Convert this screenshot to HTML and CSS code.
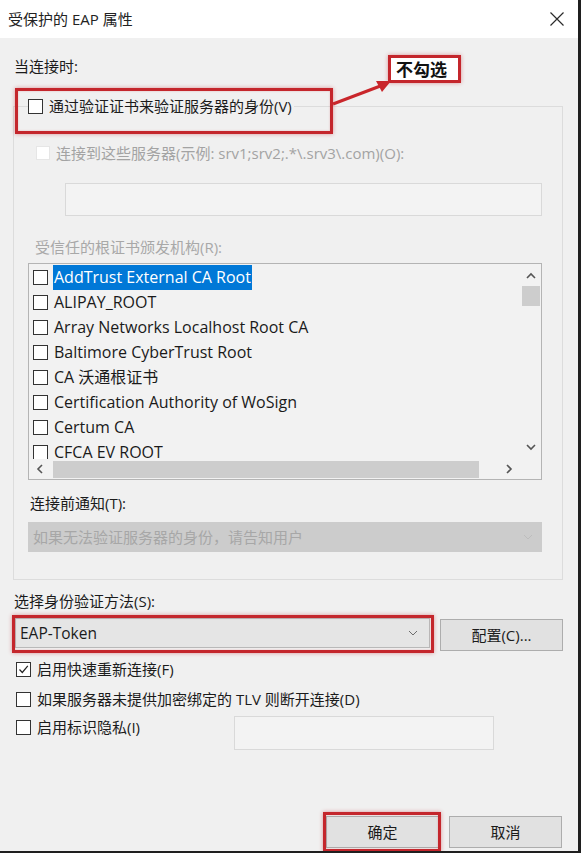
FILE: index.html
```html
<!DOCTYPE html>
<html lang="zh-CN">
<head>
<meta charset="utf-8">
<title>受保护的 EAP 属性</title>
<link rel="stylesheet" href="styles.css">
</head>
<body>
<div class="window">
  <div class="titlebar">
    <span class="title">受保护的 EAP 属性</span>
    <svg class="close" width="16" height="16" viewBox="0 0 16 16"><path d="M1.5 1.5 L14.5 14.5 M14.5 1.5 L1.5 14.5" stroke="#2b2b2b" stroke-width="1.2" fill="none"/></svg>
  </div>
  <div class="content">
    <div class="label label-top">当连接时:</div>
    <fieldset class="group">
      <legend class="legend"><span class="cb"></span><span>通过验证证书来验证服务器的身份(V)</span></legend>
      <div class="dis-row"><span class="cb cb-dis"></span><span>连接到这些服务器(示例: srv1;srv2;.*\.srv3\.com)(O):</span></div>
      <div class="textbox"></div>
      <div class="label label-dis">受信任的根证书颁发机构(R):</div>
      <div class="listbox">
        <div class="list-main">
          <div class="items">
            <div class="item"><span class="cb"></span><span class="item-text sel">AddTrust External CA Root</span></div>
            <div class="item"><span class="cb"></span><span class="item-text">ALIPAY_ROOT</span></div>
            <div class="item"><span class="cb"></span><span class="item-text">Array Networks Localhost Root CA</span></div>
            <div class="item"><span class="cb"></span><span class="item-text">Baltimore CyberTrust Root</span></div>
            <div class="item"><span class="cb"></span><span class="item-text">CA 沃通根证书</span></div>
            <div class="item"><span class="cb"></span><span class="item-text">Certification Authority of WoSign</span></div>
            <div class="item"><span class="cb"></span><span class="item-text">Certum CA</span></div>
            <div class="item"><span class="cb"></span><span class="item-text">CFCA EV ROOT</span></div>
          </div>
          <div class="vscroll">
            <svg class="arr" width="10" height="8" viewBox="0 0 10 8"><path d="M1 6 L5 2 L9 6" stroke="#555" stroke-width="1.6" fill="none"/></svg>
            <div class="vthumb"></div>
            <div class="vtrack"></div>
            <svg class="arr" width="10" height="8" viewBox="0 0 10 8"><path d="M1 2 L5 6 L9 2" stroke="#555" stroke-width="1.6" fill="none"/></svg>
          </div>
        </div>
        <div class="hscroll-row">
          <div class="hscroll">
            <svg class="harr" width="8" height="10" viewBox="0 0 8 10"><path d="M6 1 L2 5 L6 9" stroke="#555" stroke-width="1.6" fill="none"/></svg>
            <div class="hthumb"></div>
            <svg class="harr" width="8" height="10" viewBox="0 0 8 10"><path d="M2 1 L6 5 L2 9" stroke="#555" stroke-width="1.6" fill="none"/></svg>
          </div>
          <div class="corner"></div>
        </div>
      </div>
      <div class="label label-notify">连接前通知(T):</div>
      <div class="select select-dis">
        <span>如果无法验证服务器的身份，请告知用户</span>
        <svg width="10" height="6" viewBox="0 0 10 6"><path d="M1 1 L5 5 L9 1" stroke="#bdbdbd" stroke-width="1" fill="none"/></svg>
      </div>
    </fieldset>
    <div class="label label-method">选择身份验证方法(S):</div>
    <div class="method-row">
      <div class="select select-eap">
        <span>EAP-Token</span>
        <svg width="10" height="6" viewBox="0 0 10 6"><path d="M1 1 L5 5 L9 1" stroke="#6d6d6d" stroke-width="1" fill="none"/></svg>
      </div>
      <div class="btn btn-config">配置(C)...</div>
    </div>
    <div class="check-row row-fast"><span class="cb cb-on"><svg width="13" height="13" viewBox="0 0 13 13"><path d="M2.5 6.5 L5.3 9.5 L10.8 2.8" stroke="#222" stroke-width="1.2" fill="none"/></svg></span><span>启用快速重新连接(F)</span></div>
    <div class="check-row row-tlv"><span class="cb"></span><span>如果服务器未提供加密绑定的 TLV 则断开连接(D)</span></div>
    <div class="privacy-row">
      <div class="check-row row-priv"><span class="cb"></span><span>启用标识隐私(I)</span></div>
      <div class="textbox textbox-priv"></div>
    </div>
    <div class="footer">
      <div class="btn btn-ok">确定</div>
      <div class="btn btn-cancel">取消</div>
    </div>
  </div>

  <div class="mark mark-verify"></div>
  <div class="mark mark-eap"></div>
  <div class="mark mark-ok"></div>
  <div class="note">不勾选</div>
  <svg class="arrow" width="70" height="40" viewBox="0 0 70 40"><path d="M2 30 L52 11" stroke="#c9262b" stroke-width="3" fill="none"/><path d="M60 7 L45 7 L51 18 Z" fill="#c9262b"/></svg>
</div>
</body>
</html>
```

FILE: styles.css
```css
* { box-sizing: border-box; }

body {
  margin: 0;
  background: #1f1f1f;
}

.window {
  position: relative;
  width: 578px;
  height: 851px;
  background: #f0f0f0;
  display: flex;
  flex-direction: column;
  font-family: "Open Sans", "Noto Sans CJK SC", sans-serif;
  font-size: 15px;
  line-height: 20px;
  color: #1b1b1b;
}

.titlebar {
  height: 38px;
  flex: none;
  background: #ffffff;
  display: flex;
  align-items: center;
  justify-content: space-between;
  padding: 0 13px 0 8px;
}

.title {
  font-size: 15px;
  color: #222;
}

.content {
  flex: 1;
  display: flex;
  flex-direction: column;
  padding: 0 15px 0 13px;
}

.label {
  height: 20px;
  white-space: nowrap;
}

.label-top {
  margin-top: 18px;
  margin-left: 1px;
}

.group {
  margin: 20px 0 0 0;
  padding: 0 20px 27px 14px;
  border: 1px solid #dcdcdc;
  min-width: 0;
}

.legend {
  padding: 0 2px 0 0;
  display: flex;
  align-items: center;
  gap: 6px;
  height: 20px;
}

.cb {
  flex: none;
  width: 15px;
  height: 15px;
  background: #ffffff;
  border: 1px solid #333333;
  display: inline-flex;
  align-items: center;
  justify-content: center;
}

.cb-dis {
  border-color: #e6e6e6;
  width: 14px;
  height: 14px;
}

.dis-row {
  margin: 27px 0 0 8px;
  height: 20px;
  display: flex;
  align-items: center;
  gap: 6px;
  color: #a3a3a3;
  white-space: nowrap;
}

.textbox {
  margin: 20px 0 0 37px;
  height: 33px;
  background: #f3f3f3;
  border: 1px solid #d9d9d9;
}

.label-dis {
  margin: 21px 0 0 7px;
  color: #a8a8a8;
}

.listbox {
  margin-top: 6px;
  height: 217px;
  border: 1px solid #b4b4b4;
  background: #f2f2f2;
  display: flex;
  flex-direction: column;
}

.list-main {
  height: 195px;
  display: flex;
}

.items {
  flex: 1;
  overflow: hidden;
  padding: 1px 0 0 4px;
  font-size: 16px;
}

.item {
  height: 25px;
  display: flex;
  align-items: center;
  gap: 5px;
  white-space: nowrap;
}

.item-text {
  padding: 0 1px;
  height: 25px;
  line-height: 25px;
  color: #1a1a1a;
}

.item-text.sel {
  background: #0078d7;
  color: #ffffff;
}

.vscroll {
  flex: none;
  width: 21px;
  display: flex;
  flex-direction: column;
  align-items: center;
  padding-top: 8px;
}

.arr {
  flex: none;
}

.vthumb {
  flex: none;
  width: 18px;
  height: 20px;
  margin-top: 6px;
  background: #cdcdcd;
}

.vtrack {
  flex: 1;
}

.vscroll .arr:last-child {
  margin-bottom: 8px;
}

.hscroll-row {
  height: 20px;
  display: flex;
}

.hscroll {
  flex: 1;
  display: flex;
  align-items: center;
  padding: 0 7px 0 7px;
}

.harr {
  flex: none;
}

.hthumb {
  width: 426px;
  height: 17px;
  margin: 0 0 0 9px;
  background: #cdcdcd;
}

.hscroll .harr:last-child {
  margin-left: auto;
}

.corner {
  width: 21px;
}

.label-notify {
  margin: 13px 0 0 2px;
}

.select {
  height: 30px;
  display: flex;
  align-items: center;
  justify-content: space-between;
  white-space: nowrap;
}

.select-dis {
  margin-top: 9px;
  background: #cccccc;
  color: #a7a7a7;
  padding: 0 9px 0 5px;
}

.label-method {
  margin: 11px 0 0 1px;
}

.method-row {
  margin-top: 7px;
  display: flex;
  align-items: flex-start;
  gap: 10px;
}

.select-eap {
  margin-left: 2px;
  width: 415px;
  background: #e5e5e5;
  border: 1px solid #b9b9b9;
  padding: 0 11px 0 4px;
  color: #1b1b1b;
  font-size: 15.5px;
}

.btn {
  display: flex;
  align-items: center;
  justify-content: center;
  background: #e1e1e1;
  border: 1px solid #adadad;
  color: #1b1b1b;
  height: 32px;
}

.btn-config {
  width: 123px;
  margin-top: 1px;
}

.check-row {
  height: 20px;
  display: flex;
  align-items: center;
  gap: 6px;
  margin-left: 3px;
  white-space: nowrap;
}

.row-fast {
  margin-top: 8px;
}

.row-tlv {
  margin-top: 10px;
}

.privacy-row {
  margin-top: 7px;
  display: flex;
  align-items: flex-start;
}

.row-priv {
  margin-top: 1px;
}

.textbox-priv {
  margin: 0 0 0 94px;
  width: 260px;
  height: 34px;
}

.footer {
  margin-top: auto;
  padding-bottom: 3px;
  display: flex;
  justify-content: flex-end;
  gap: 10px;
  padding-right: 1px;
}

.btn-ok,
.btn-cancel {
  width: 113px;
}

.mark {
  position: absolute;
  border: 3px solid #c4262c;
  box-shadow: 0 0 4px rgba(196, 38, 44, 0.45), inset 0 0 2px rgba(196, 38, 44, 0.3);
}

.mark-verify {
  left: 15px;
  top: 88px;
  width: 318px;
  height: 46px;
}

.mark-eap {
  left: 12px;
  top: 615px;
  width: 422px;
  height: 38px;
}

.mark-ok {
  left: 323px;
  top: 812px;
  width: 118px;
  height: 40px;
}

.note {
  position: absolute;
  left: 388px;
  top: 55px;
  width: 73px;
  height: 28px;
  background: #ffffff;
  border: 3px solid #c4262c;
  box-shadow: 0 0 4px rgba(196, 38, 44, 0.45);
  font-family: "Noto Sans CJK SC", sans-serif;
  font-weight: 700;
  font-size: 17px;
  line-height: 22px;
  padding-left: 5px;
  color: #111;
}

.arrow {
  position: absolute;
  left: 331px;
  top: 74px;
}
```
